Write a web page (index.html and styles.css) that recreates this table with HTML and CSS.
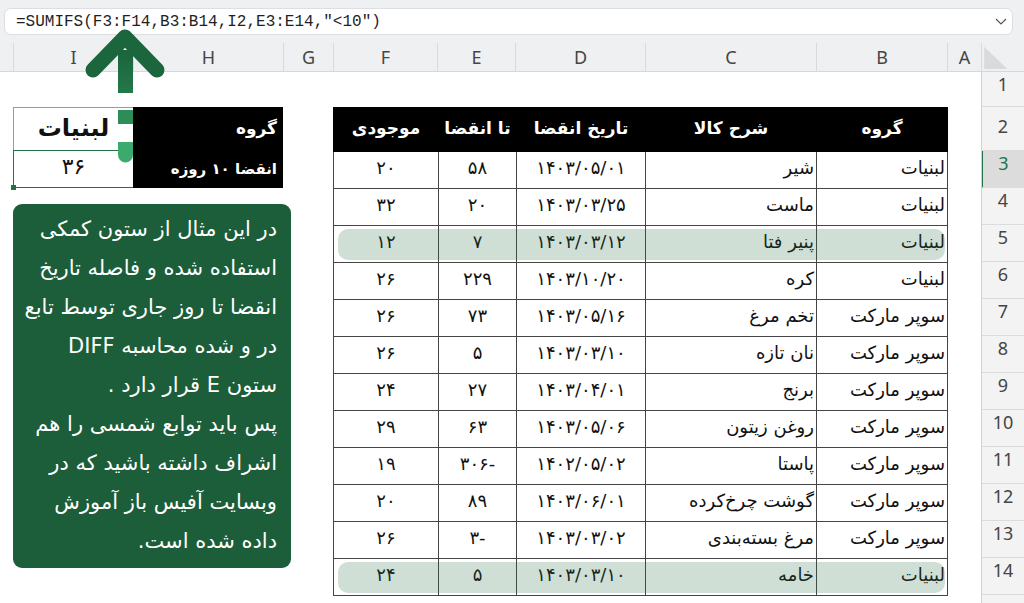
FILE: index.html
```html
<!DOCTYPE html>
<html lang="fa">
<head>
<meta charset="utf-8">
<title>SUMIFS</title>
<link rel="stylesheet" href="styles.css">
</head>
<body>
<div class="app">
  <div class="topbar">
    <div class="formula">
      <span class="formula-text">=SUMIFS(F3:F14,B3:B14,I2,E3:E14,"&lt;10")</span>
      <svg class="chev" viewBox="0 0 12 7"><path d="M1 1 L6 6 L11 1" fill="none" stroke="#555" stroke-width="1.2"/></svg>
    </div>
  </div>

  <div class="colheads">
    <div class="ch gut"></div>
    <div class="ch c-i">I</div>
    <div class="ch c-h">H</div>
    <div class="ch c-g">G</div>
    <div class="ch c-f">F</div>
    <div class="ch c-e">E</div>
    <div class="ch c-d">D</div>
    <div class="ch c-c">C</div>
    <div class="ch c-b">B</div>
    <div class="ch c-a">A</div>
    <div class="ch corner"><svg viewBox="0 0 43 29" class="corner-tri"><polygon points="2,4 2,27 26,27" fill="#d9dadb"/></svg></div>
  </div>

  <div class="sheet">
    <div class="canvas">
      <div class="leftcol">
        <div class="lookup" dir="rtl">
          <div class="lk-h lk-h1">گروه</div>
          <div class="lk-i lk-i1">لبنیات</div>
          <div class="lk-h lk-h2">انقضا ۱۰ روزه</div>
          <div class="lk-i lk-i2">۳۶<span class="handle"></span></div>
        </div>
        <div class="note" dir="rtl">
          در این مثال از ستون کمکی<br>
          استفاده شده و فاصله تاریخ<br>
          انقضا تا روز جاری توسط تابع<br>
          در و شده محاسبه DIFF<br>
          ستون E قرار دارد .<br>
          پس باید توابع شمسی را هم<br>
          اشراف داشته باشید که در<br>
          وبسایت آفیس باز آموزش<br>
          داده شده است.
        </div>
      </div>

      <table class="data" dir="rtl">
        <colgroup>
          <col class="k-b"><col class="k-c"><col class="k-d"><col class="k-e"><col class="k-f">
        </colgroup>
        <thead>
          <tr><th>گروه</th><th>شرح کالا</th><th>تاریخ انقضا</th><th>تا انقضا</th><th>موجودی</th></tr>
        </thead>
        <tbody>
          <tr><td class="t">لبنیات</td><td class="t">شیر</td><td class="n">۱۴۰۳/۰۵/۰۱</td><td class="n">۵۸</td><td class="n">۲۰</td></tr>
          <tr><td class="t">لبنیات</td><td class="t">ماست</td><td class="n">۱۴۰۳/۰۳/۲۵</td><td class="n">۲۰</td><td class="n">۳۲</td></tr>
          <tr class="hl"><td class="t">لبنیات</td><td class="t">پنیر فتا</td><td class="n">۱۴۰۳/۰۳/۱۲</td><td class="n">۷</td><td class="n">۱۲</td></tr>
          <tr><td class="t">لبنیات</td><td class="t">کره</td><td class="n">۱۴۰۳/۱۰/۲۰</td><td class="n">۲۲۹</td><td class="n">۲۶</td></tr>
          <tr><td class="t">سوپر مارکت</td><td class="t">تخم مرغ</td><td class="n">۱۴۰۳/۰۵/۱۶</td><td class="n">۷۳</td><td class="n">۲۶</td></tr>
          <tr><td class="t">سوپر مارکت</td><td class="t">نان تازه</td><td class="n">۱۴۰۳/۰۳/۱۰</td><td class="n">۵</td><td class="n">۲۶</td></tr>
          <tr><td class="t">سوپر مارکت</td><td class="t">برنج</td><td class="n">۱۴۰۳/۰۴/۰۱</td><td class="n">۲۷</td><td class="n">۲۴</td></tr>
          <tr><td class="t">سوپر مارکت</td><td class="t">روغن زیتون</td><td class="n">۱۴۰۳/۰۵/۰۶</td><td class="n">۶۳</td><td class="n">۲۹</td></tr>
          <tr><td class="t">سوپر مارکت</td><td class="t">پاستا</td><td class="n">۱۴۰۲/۰۵/۰۲</td><td class="n">۳۰۶-</td><td class="n">۱۹</td></tr>
          <tr><td class="t">سوپر مارکت</td><td class="t">گوشت چرخ‌کرده</td><td class="n">۱۴۰۳/۰۶/۰۱</td><td class="n">۸۹</td><td class="n">۲۰</td></tr>
          <tr><td class="t">سوپر مارکت</td><td class="t">مرغ بسته‌بندی</td><td class="n">۱۴۰۳/۰۳/۰۲</td><td class="n">۳-</td><td class="n">۲۶</td></tr>
          <tr class="hl"><td class="t">لبنیات</td><td class="t">خامه</td><td class="n">۱۴۰۳/۰۳/۱۰</td><td class="n">۵</td><td class="n">۲۴</td></tr>
        </tbody>
      </table>
    </div>

    <div class="rowheads">
      <div class="rh r1">1</div>
      <div class="rh r2">2</div>
      <div class="rh sel">3</div>
      <div class="rh">4</div>
      <div class="rh">5</div>
      <div class="rh">6</div>
      <div class="rh">7</div>
      <div class="rh">8</div>
      <div class="rh">9</div>
      <div class="rh">10</div>
      <div class="rh">11</div>
      <div class="rh">12</div>
      <div class="rh">13</div>
      <div class="rh">14</div>
      <div class="rh"></div>
    </div>
  </div>

  <svg class="arrow" viewBox="0 0 80 140" width="80" height="140">
    <defs>
      <linearGradient id="shaft" x1="0" y1="0" x2="0" y2="1">
        <stop offset="0" stop-color="#1b653c"/>
        <stop offset="1" stop-color="#23784a"/>
      </linearGradient>
    </defs>
    <rect x="33" y="22" width="15" height="43" fill="url(#shaft)"/>
    <polyline points="8,42 40,9 72,42" fill="none" stroke="#1b663d" stroke-width="15" stroke-linecap="round" stroke-linejoin="round"/>
    <rect x="33" y="82" width="15" height="14" fill="#2d8c58"/>
    <path d="M33 114 H48 V127 A7.5 7.5 0 0 1 33 127 Z" fill="#3aab6c"/>
  </svg>
</div>
</body>
</html>
```

FILE: styles.css
```css
* { box-sizing: border-box; margin: 0; padding: 0; }

html, body {
  width: 1024px;
  height: 603px;
  overflow: hidden;
  background: #ffffff;
}

body {
  font-family: "DejaVu Sans", sans-serif;
  color: #111;
}

.app {
  position: relative;
  width: 1024px;
  height: 603px;
}

/* formula bar */
.topbar {
  height: 43px;
  background: #eef0f2;
  padding: 8px 11px 0 4px;
}

.formula {
  height: 27px;
  background: #fff;
  border: 1px solid #dcdfe2;
  border-radius: 7px;
  display: flex;
  align-items: center;
  padding: 0 5px 0 11px;
}

.formula-text {
  font-family: "Liberation Mono", monospace;
  font-size: 16px;
  color: #1f1f1f;
  direction: ltr;
  white-space: pre;
}

.chev {
  margin-left: auto;
  width: 12px;
  height: 7px;
}

/* column headers */
.colheads {
  display: flex;
  height: 29px;
  background: #eff0f1;
  border-bottom: 1px solid #d5d7d9;
}

.ch {
  flex: none;
  display: flex;
  align-items: center;
  justify-content: center;
  font-family: "Noto Sans", sans-serif;
  font-size: 18px;
  color: #454545;
  border-left: 1px solid #d9dadb;
}

.gut { width: 13px; border-left: 0; }
.c-i { width: 120px; }
.c-h { width: 150px; }
.c-g { width: 50px; }
.c-f { width: 104px; }
.c-e { width: 78px; }
.c-d { width: 130px; }
.c-c { width: 171px; }
.c-b { width: 131px; }
.c-a { width: 34px; }
.corner { width: 43px; align-items: stretch; justify-content: stretch; }
.corner-tri { width: 43px; height: 28px; display: block; }

/* sheet */
.sheet {
  display: flex;
  height: 531px;
}

.canvas {
  width: 981px;
  flex: none;
  display: flex;
  align-items: flex-start;
  padding: 35px 0 0 13px;
  background: #fff;
}

.leftcol {
  width: 278px;
  flex: none;
  display: flex;
  flex-direction: column;
}

.lookup {
  width: 270px;
  display: grid;
  grid-template-columns: 150px 120px;
  grid-template-rows: 43px 38px;
  font-weight: bold;
}

.lk-h {
  background: #000;
  color: #fff;
  display: flex;
  align-items: center;
  padding-right: 6px;
}

.lk-h1 { font-size: 17px; padding-bottom: 2px; }
.lk-h2 { font-size: 15px; }

.lk-i {
  display: flex;
  align-items: center;
  justify-content: center;
  background: #fff;
  position: relative;
}

.lk-i1 {
  font-size: 24px;
  border-top: 1px solid #9a9a9a;
  border-left: 1px solid #9a9a9a;
  padding-bottom: 2px;
}

.lk-i2 {
  font-size: 22px;
  font-weight: normal;
  border: 1px solid #217346;
  border-right: 0;
  padding-bottom: 5px;
}

.handle {
  position: absolute;
  left: -3px;
  bottom: -3px;
  width: 5px;
  height: 5px;
  background: #217346;
}

.note {
  margin-top: 16px;
  width: 278px;
  height: 364px;
  background: #1c5d3a;
  border-radius: 9px;
  color: #fff;
  font-size: 21px;
  line-height: 39px;
  padding: 6px 14px 0 4px;
  text-align: right;
  white-space: nowrap;
}

/* data table */
.data {
  margin-left: 42px;
  width: 614px;
  border-collapse: collapse;
  table-layout: fixed;
  font-size: 18px;
}

.k-b { width: 131px; }
.k-c { width: 171px; }
.k-d { width: 129px; }
.k-e { width: 78px; }
.k-f { width: 105px; }

.data th {
  height: 44px;
  background: #000;
  color: #fff;
  font-size: 17px;
  font-weight: bold;
  text-align: center;
  border: 1px solid #000;
  padding-bottom: 4px;
}

.data td {
  height: 37px;
  border: 1px solid #454545;
  padding: 0 2px 5px 2px;
  vertical-align: middle;
  white-space: nowrap;
}

.data .t { text-align: right; }
.data .n { text-align: center; direction: ltr; }

.data tr.hl { position: relative; }

.data tr.hl::after {
  content: "";
  position: absolute;
  top: 3px;
  bottom: 3px;
  left: 4px;
  right: 3px;
  border-radius: 10px;
  background: rgba(40, 110, 70, 0.22);
  pointer-events: none;
}

/* row headers */
.rowheads {
  width: 43px;
  flex: none;
  background: #f3f3f3;
  border-left: 1px solid #d2d2d2;
  overflow: hidden;
}

.rh {
  height: 37px;
  display: flex;
  align-items: center;
  justify-content: center;
  font-family: "Noto Sans", sans-serif;
  font-size: 18px;
  color: #454545;
  border-bottom: 1px solid #dcdcdc;
  padding-bottom: 12px;
}

.rh.r1 { height: 35px; padding-bottom: 10px; }
.rh.r2 { height: 44px; padding-bottom: 6px; }

.rh.sel {
  background: #dcdcdc;
  color: #217346;
  border-left: 2px solid #217346;
  margin-left: -1px;
}

/* callout arrow */
.arrow {
  position: absolute;
  left: 85px;
  top: 28px;
  pointer-events: none;
}
```
